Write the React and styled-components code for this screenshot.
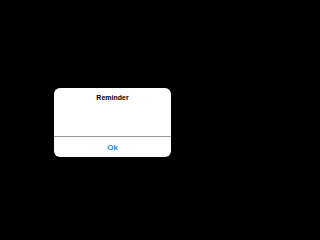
import React from 'react';
import styled, { createGlobalStyle } from 'styled-components';

const GlobalStyle = createGlobalStyle`
  html, body {
    margin: 0;
    padding: 0;
    background: #000;
  }
`;

const Screen = styled.div`
  width: 225px;
  height: 225px;
  padding: 88px 0 0 54px;
  box-sizing: border-box;
  background: #000;
  font-family: "Liberation Sans", Arial, sans-serif;
`;

const Dialog = styled.div`
  width: 117px;
  height: 69px;
  background: #fff;
  border-radius: 6px;
  display: flex;
  flex-direction: column;
  overflow: hidden;
`;

const Body = styled.div`
  height: 49px;
  display: flex;
  justify-content: center;
  padding-top: 5px;
  box-sizing: border-box;
  border-bottom: 1px solid #9a9a9a;
`;

const Title = styled.div`
  font-size: 7px;
  font-weight: bold;
  line-height: 9px;
  color: #000;
`;

const Button = styled.button`
  flex: 1;
  border: 0;
  padding: 0;
  margin: 0;
  background: transparent;
  font-family: inherit;
  font-size: 8px;
  font-weight: bold;
  color: #1a8cf0;
`;

export default function App() {
  return (
    <>
      <GlobalStyle />
      <Screen>
        <Dialog>
          <Body>
            <Title>Reminder</Title>
          </Body>
          <Button>Ok</Button>
        </Dialog>
      </Screen>
    </>
  );
}
